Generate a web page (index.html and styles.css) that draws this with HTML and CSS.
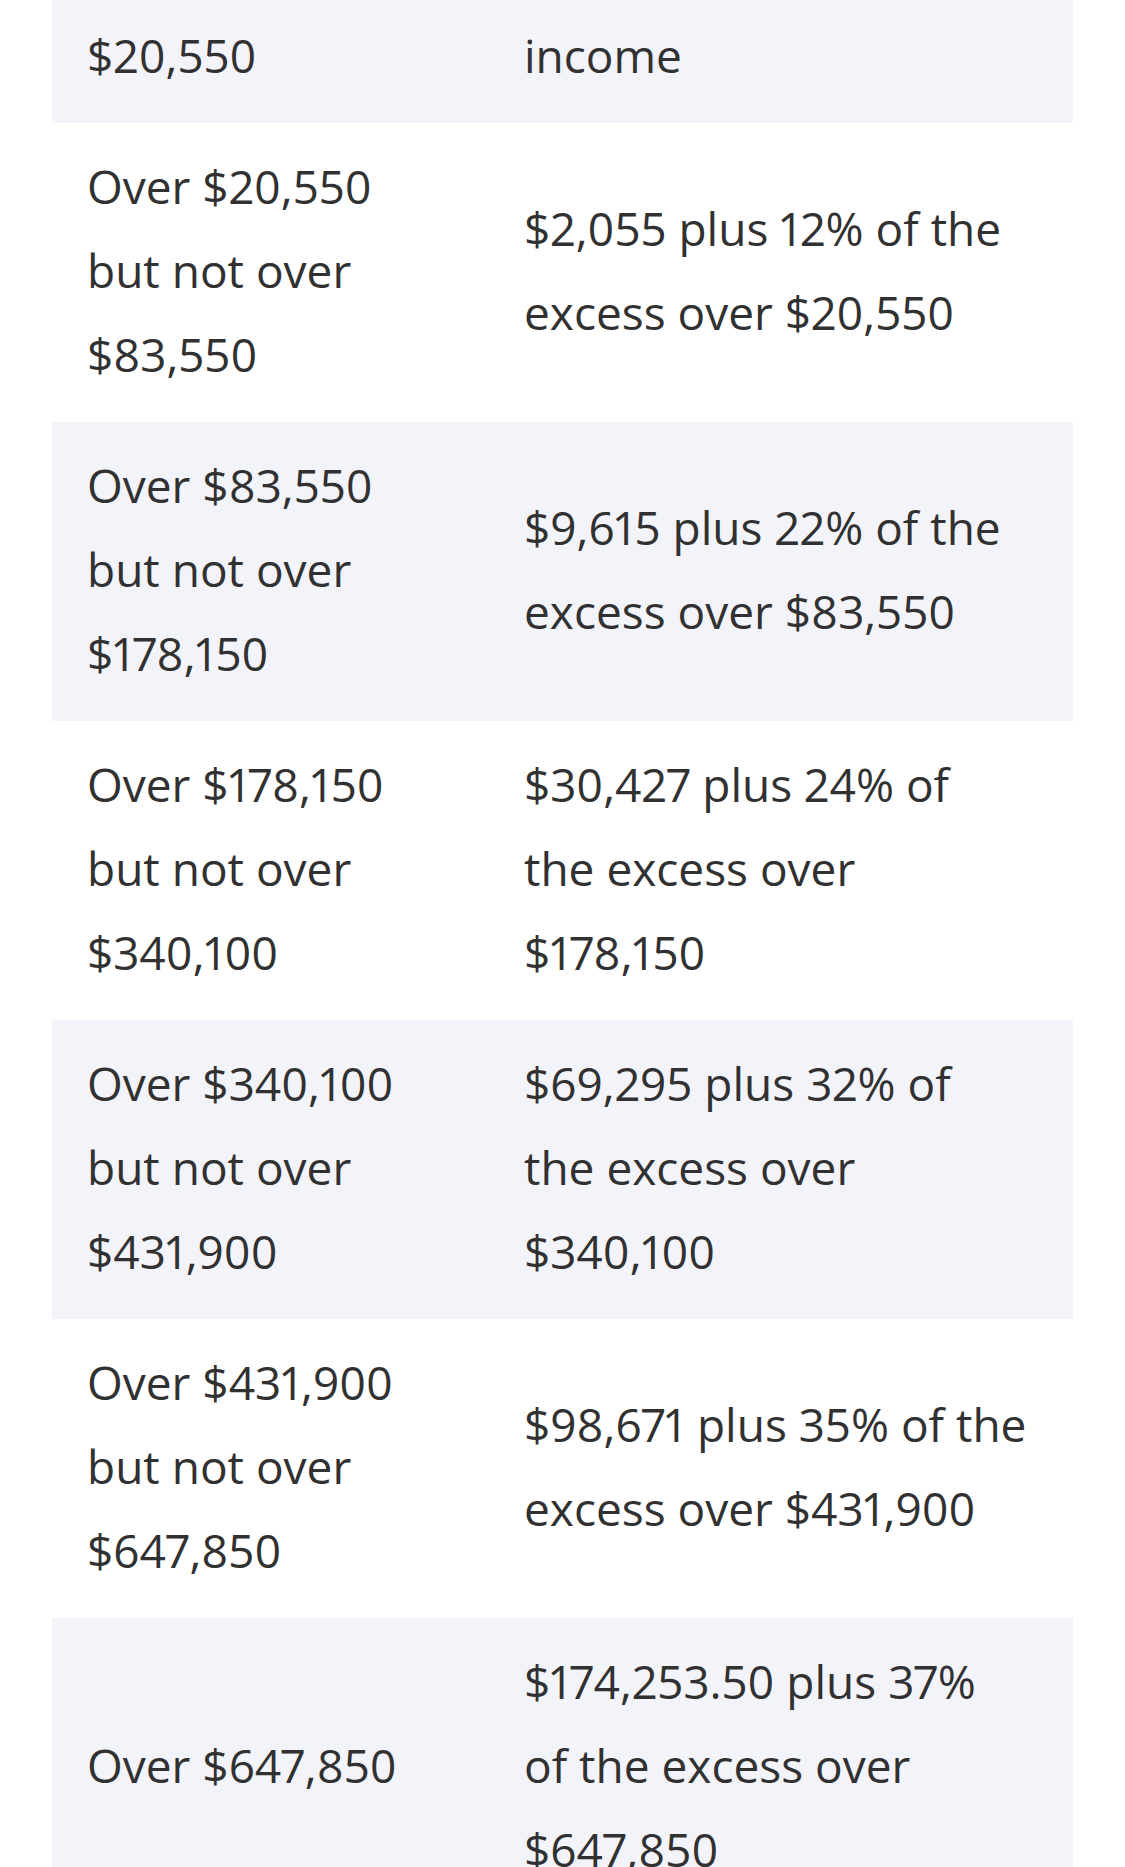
FILE: index.html
```html
<!DOCTYPE html>
<html lang="en">
<head>
<meta charset="utf-8">
<title>Tax brackets</title>
<link rel="stylesheet" href="styles.css">
</head>
<body>
<div class="page">
  <div class="table">
    <div class="row">
      <div class="cell c1">Not over<br>$20,550</div>
      <div class="cell c2">10% of taxable<br>income</div>
    </div>
    <div class="row">
      <div class="cell c1">Over $20,550<br>but not over<br>$83,550</div>
      <div class="cell c2">$2,055 plus 12% of the<br>excess over $20,550</div>
    </div>
    <div class="row">
      <div class="cell c1">Over $83,550<br>but not over<br>$178,150</div>
      <div class="cell c2">$9,615 plus 22% of the<br>excess over $83,550</div>
    </div>
    <div class="row">
      <div class="cell c1">Over $178,150<br>but not over<br>$340,100</div>
      <div class="cell c2">$30,427 plus 24% of<br>the excess over<br>$178,150</div>
    </div>
    <div class="row">
      <div class="cell c1">Over $340,100<br>but not over<br>$431,900</div>
      <div class="cell c2">$69,295 plus 32% of<br>the excess over<br>$340,100</div>
    </div>
    <div class="row">
      <div class="cell c1">Over $431,900<br>but not over<br>$647,850</div>
      <div class="cell c2">$98,671 plus 35% of the<br>excess over $431,900</div>
    </div>
    <div class="row">
      <div class="cell c1">Over $647,850</div>
      <div class="cell c2">$174,253.50 plus 37%<br>of the excess over<br>$647,850</div>
    </div>
  </div>
</div>
</body>
</html>
```

FILE: styles.css
```css
html, body {
  margin: 0;
  padding: 0;
  background: #ffffff;
}
body {
  font-family: "Open Sans", "Liberation Sans", sans-serif;
  font-variant-numeric: proportional-nums;
  color: #313131;
  font-size: 46px;
  line-height: 84px;
}
.page {
  padding: 0 52px;
  height: 1867px;
  overflow: hidden;
}
.table {
  margin-top: -92px;
}
.row {
  display: grid;
  grid-template-columns: 437px 1fr;
}
.row:nth-child(odd) {
  background: #f3f4f9;
}
.cell {
  padding: 21px 20px 26px 35px;
  display: flex;
  align-items: center;
  white-space: nowrap;
}
```
